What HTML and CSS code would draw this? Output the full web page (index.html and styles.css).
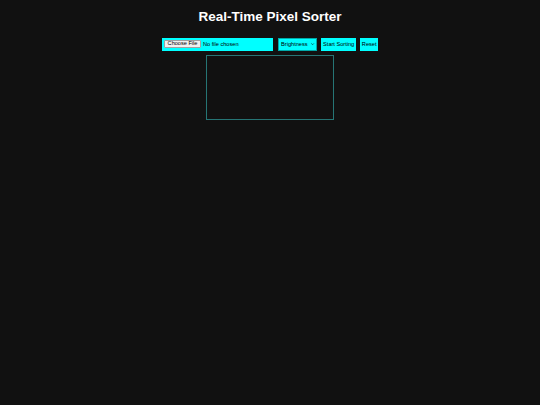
FILE: index.html
```
<!DOCTYPE html>
<html lang="en">
<head>
<meta charset="utf-8">
<title>Real-Time Pixel Sorter</title>
<link rel="stylesheet" href="styles.css">
</head>
<body>
<h1 class="title">Real-Time Pixel Sorter</h1>
<div class="controls">
  <label class="file-picker">
    <input type="file" class="file-native" accept="image/*">
    <span class="file-btn">Choose File</span>
    <span class="file-name">No file chosen</span>
  </label>
  <span class="mode-wrap">
    <select class="mode">
      <option>Brightness</option>
      <option>Hue</option>
      <option>Saturation</option>
    </select>
    <svg class="chevron" viewBox="0 0 10 6" aria-hidden="true"><path d="M1 1 L5 5 L9 1" fill="none" stroke="#000" stroke-width="1.8"/></svg>
  </span>
  <button class="btn">Start Sorting</button>
  <button class="btn">Reset</button>
</div>
<div class="stage">
  <canvas class="canvas" width="300" height="150"></canvas>
</div>
</body>
</html>
```
FILE: styles.css
```
body {
  margin: 0;
  background: #111111;
  color: #ffffff;
  font-family: "Liberation Sans", Arial, sans-serif;
  text-align: center;
}

.title {
  font-size: 13.5px;
  font-weight: bold;
  line-height: 15.5px;
  margin: 9px 0 13px;
}

.controls {
  display: flex;
  justify-content: center;
  align-items: stretch;
  gap: 4.3px;
  height: 13px;
}

.file-picker,
.mode,
.btn {
  background: #00ffff;
  color: #000000;
  border: none;
  border-radius: 0;
  margin: 0;
  height: 13px;
  box-sizing: border-box;
  font-family: "Liberation Sans", Arial, sans-serif;
  font-size: 5.6px;
}

.file-picker {
  display: flex;
  align-items: center;
  width: 111.4px;
  padding: 0 2.4px;
  cursor: pointer;
}

.file-native {
  display: none;
}

.file-btn {
  display: flex;
  align-items: center;
  height: 7.4px;
  padding: 0 2.4px;
  box-sizing: border-box;
  border: 0.5px solid #a0a0a0;
  border-radius: 1px;
  background: #efefef;
  line-height: 1;
}

.file-name {
  margin-left: 2.2px;
  white-space: nowrap;
}

.mode-wrap {
  position: relative;
  display: block;
  width: 39.6px;
  height: 13px;
}

.mode {
  appearance: none;
  -webkit-appearance: none;
  display: block;
  width: 100%;
  padding: 0 5px 0 2.6px;
  text-align: left;
  border: 0.5px solid #0aa;
}

.chevron {
  position: absolute;
  right: 2.6px;
  top: 5.4px;
  width: 3.2px;
  height: 2.2px;
  pointer-events: none;
}

.btn {
  padding: 0 1.7px;
}

.stage {
  margin-top: 4.3px;
}

.canvas {
  display: block;
  margin: 0 auto;
  width: 126px;
  height: 63px;
  border: 1px solid #267575;
}
```
